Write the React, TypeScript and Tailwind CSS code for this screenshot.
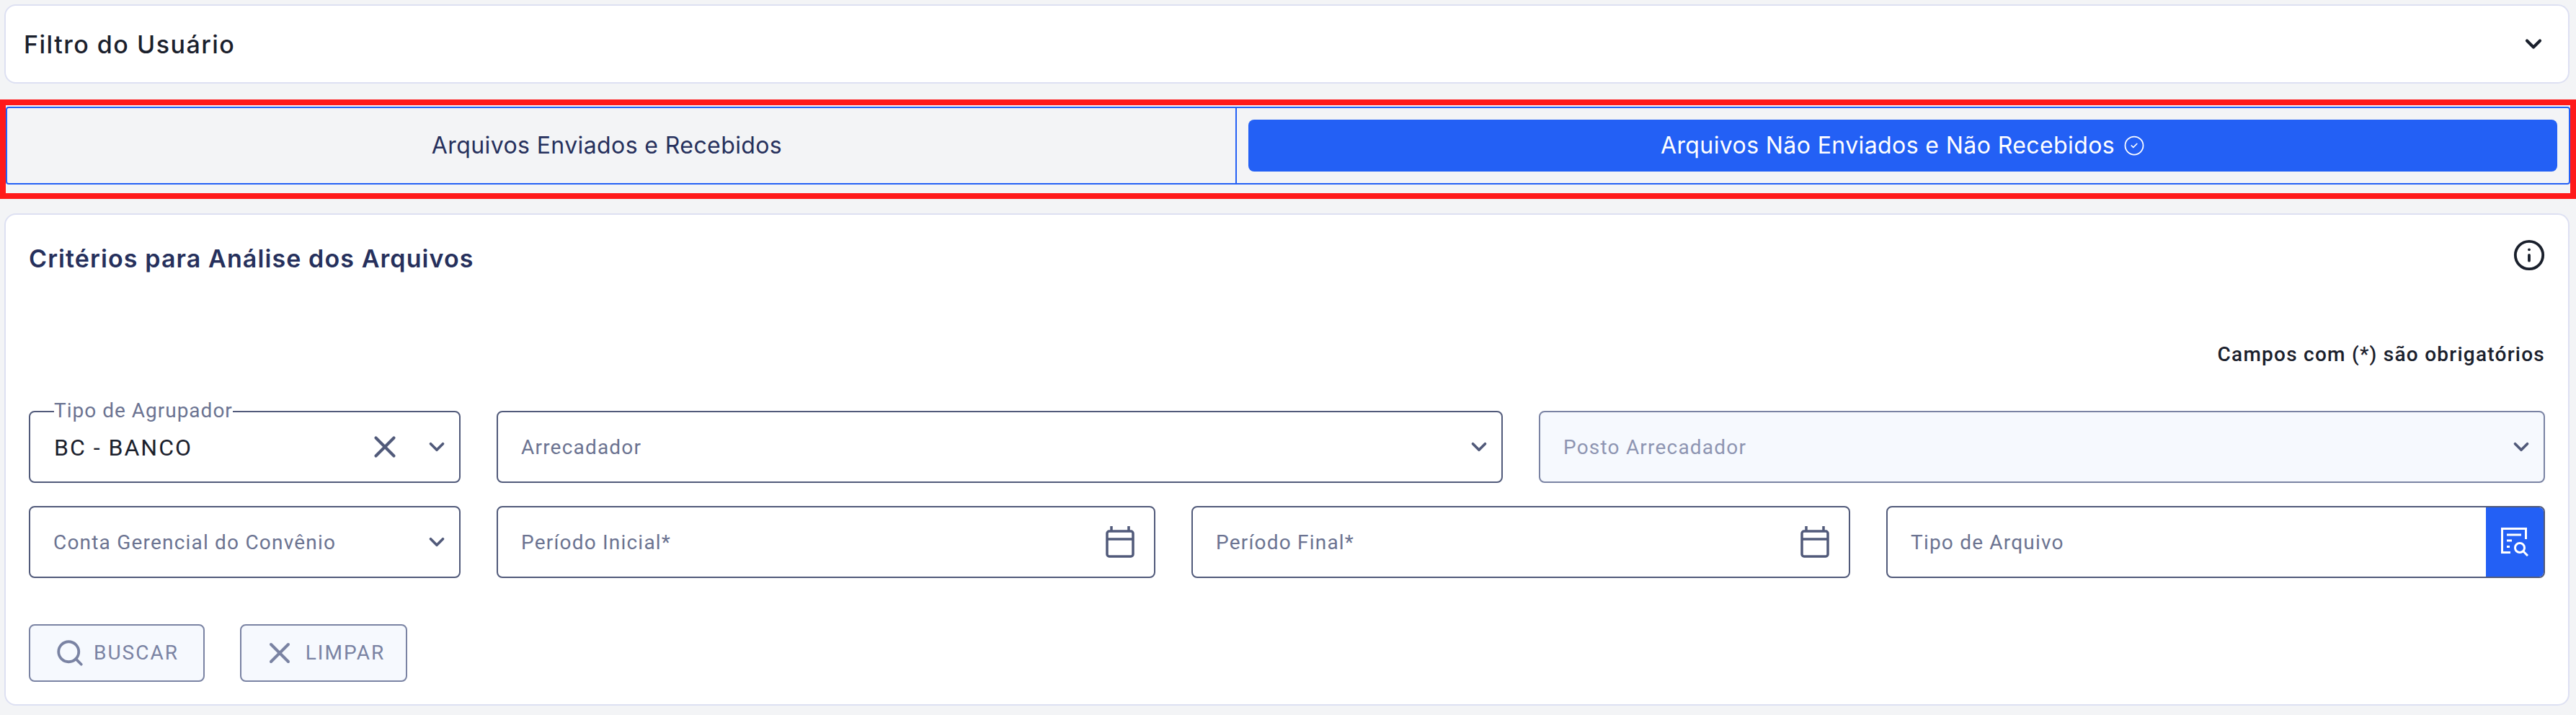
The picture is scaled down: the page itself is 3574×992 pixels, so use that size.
import React from 'react';
import { ChevronDown, CircleCheck, Info, Search, X } from 'lucide-react';

const plex = "font-['Roboto',sans-serif]";
const work = "font-['Inter',sans-serif]";

const CalendarIcon = () => (
    <svg width="40" height="44" viewBox="0 0 40 44" fill="none" stroke="#515a7a" strokeWidth="3.5" className="shrink-0 mr-[13px]">
        <rect x="2" y="7" width="36" height="35" rx="3" />
        <path d="M2 18H38" />
        <path d="M8 0V7M32 0V7" />
    </svg>
);

const DocSearchIcon = () => (
    <svg width="38" height="40" viewBox="0 0 38 40" fill="none" stroke="#ffffff" strokeWidth="3">
        <path d="M34.5 16V1.5H1.5V34.5H13" />
        <path d="M8 10H28M8 18H15M8 26.5H12" />
        <circle cx="26" cy="28" r="6.5" />
        <path d="M31 33L37 39" />
    </svg>
);

const Chevron = () => <ChevronDown size={34} strokeWidth={2.6} className="text-[#515a7a] shrink-0" />;

const Field = ({ label, disabled, icon }: { label: string; disabled?: boolean; icon: React.ReactNode }) => (
    <div className={`h-[100px] rounded-lg border-2 flex items-center justify-between pl-[32px] pr-[14px] ${disabled ? 'border-[#7a83a3] bg-[#f6f9fe]' : 'border-[#515a7a] bg-white'}`}>
        <span className={`${plex} mt-[1px] text-[28px] tracking-[1.2px] ${disabled ? 'text-[#8e95b2]' : 'text-[#6b7391]'}`}>{label}</span>
        {icon}
    </div>
);

const ActionButton = ({ label, icon, width }: { label: string; icon: React.ReactNode; width: string }) => (
    <button className={`${width} h-[80px] rounded-lg border-2 border-[#7a83a3] bg-[#f6f9fe] flex items-center justify-center gap-[12px] text-[#7a83a3] ${plex} text-[28px] tracking-[2px]`}>
        {icon}
        {label}
    </button>
);

export default function App() {
    return (
        <div className="h-[992px] bg-[#f3f4f6] pt-[6px] flex flex-col">
            <div className="mx-[6px] mr-[9px] h-[110px] rounded-2xl border-2 border-[#dde0f2] bg-white flex items-center justify-between pl-[25px] pr-[30px]">
                <span className={`${work} text-[34px] tracking-[1.5px] font-medium text-[#1a202c]`}>Filtro do Usuário</span>
                <ChevronDown size={36} strokeWidth={2.8} className="text-[#1a202c]" />
            </div>

            {/* Red annotation around the tabs */}
            <div className="mt-[22px] h-[138px] border-8 border-[#ff1a1a] pt-[2px]">
                <div className="h-[108px] rounded-sm border-2 border-[#2360f5] flex">
                    <div className="w-[1706px] border-r-2 border-[#2360f5] flex items-center justify-center gap-[12px] text-[#26305c]">
                        <span className={`${work} text-[32px] tracking-[0.4px]`}>Arquivos Enviados e Recebidos</span>
                        <CircleCheck size={28} strokeWidth={1.2} className="invisible" />
                    </div>
                    <div className="flex-1 px-[16px] py-[16px]">
                        <div className="h-full rounded-lg bg-[#2360f5] flex items-center justify-center gap-[12px] text-white">
                            <span className={`${work} text-[32px] tracking-[0.4px]`}>Arquivos Não Enviados e Não Recebidos</span>
                            <CircleCheck size={30} strokeWidth={1.4} />
                        </div>
                    </div>
                </div>
            </div>

            <div className="mt-[20px] mx-[6px] mr-[9px] h-[683px] rounded-2xl border-2 border-[#dde0f2] bg-white px-[32px]">
                <div className="mt-[24px] h-[64px] flex items-center justify-between">
                    <span className={`${work} text-[34px] tracking-[1.1px] font-semibold text-[#26305c] mt-[8px]`}>Critérios para Análise dos Arquivos</span>
                    <Info size={46} strokeWidth={2} className="text-[#1a202c] mr-[-1px]" />
                </div>

                <div className={`mt-[88px] h-[36px] leading-[36px] text-right ${plex} text-[28px] tracking-[1.25px] font-medium text-[#1a202c]`}>
                    Campos com (*) são obrigatórios
                </div>

                <div className="mt-[60px] grid grid-cols-[599px_1fr_1fr] gap-x-[50px]">
                    <div className="relative h-[100px] rounded-lg border-2 border-[#515a7a] bg-white flex items-center pl-[33px] pr-[14px]">
                        <span className={`absolute left-[33px] top-[-20px] bg-white ${plex} text-[28px] tracking-[1px] leading-[36px] text-[#6b7391]`}>Tipo de Agrupador</span>
                        <span className={`${plex} flex-1 text-[32px] tracking-[2px] text-[#1a202c] mt-[2px]`}>BC - BANCO</span>
                        <X size={50} strokeWidth={2} className="text-[#515a7a] mr-[30px]" />
                        <Chevron />
                    </div>
                    <Field label="Arrecadador" icon={<Chevron />} />
                    <Field label="Posto Arrecadador" disabled icon={<Chevron />} />
                </div>

                <div className="mt-[32px] grid grid-cols-[599px_1fr_1fr_1fr] gap-x-[50px]">
                    <Field label="Conta Gerencial do Convênio" icon={<Chevron />} />
                    <Field label="Período Inicial*" icon={<CalendarIcon />} />
                    <Field label="Período Final*" icon={<CalendarIcon />} />
                    <div className="h-[100px] rounded-lg border-2 border-[#515a7a] bg-white flex items-center overflow-hidden">
                        <span className={`${plex} flex-1 mt-[1px] pl-[32px] text-[28px] tracking-[1.2px] text-[#6b7391]`}>Tipo de Arquivo</span>
                        <div className="w-[80px] h-full bg-[#2360f5] flex items-center justify-center">
                            <DocSearchIcon />
                        </div>
                    </div>
                </div>

                <div className="mt-[64px] flex gap-[49px]">
                    <ActionButton label="BUSCAR" width="w-[244px]" icon={<Search size={42} strokeWidth={2.2} />} />
                    <ActionButton label="LIMPAR" width="w-[232px]" icon={<X size={48} strokeWidth={2} />} />
                </div>
            </div>
        </div>
    );
}
